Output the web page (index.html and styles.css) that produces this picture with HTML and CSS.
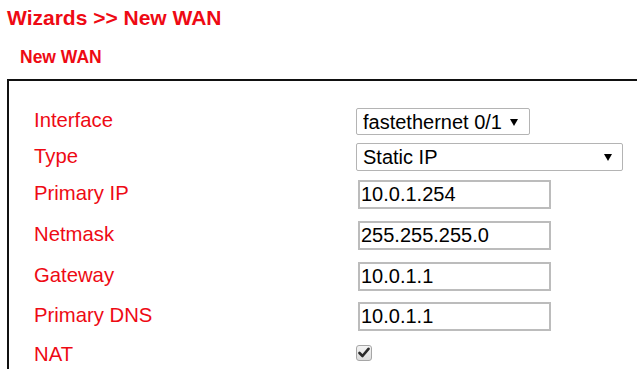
FILE: index.html
```html
<!DOCTYPE html>
<html>
<head>
<meta charset="utf-8">
<title>Wizards &gt;&gt; New WAN</title>
<link rel="stylesheet" href="styles.css">
</head>
<body>
<h1 class="title">Wizards &gt;&gt; New WAN</h1>
<h2 class="subtitle">New WAN</h2>
<div class="panel">
  <div class="row row-sel1">
    <label class="lbl">Interface</label>
    <div class="sel-wrap sel-short">
      <select class="sel"><option>fastethernet 0/1</option></select>
      <svg class="arrow" width="8" height="7" viewBox="0 0 8 7"><path d="M0 0H8L4 7Z" fill="#000"/></svg>
    </div>
  </div>
  <div class="row row-sel2">
    <label class="lbl">Type</label>
    <div class="sel-wrap sel-long">
      <select class="sel"><option>Static IP</option></select>
      <svg class="arrow" width="8" height="7" viewBox="0 0 8 7"><path d="M0 0H8L4 7Z" fill="#000"/></svg>
    </div>
  </div>
  <div class="row row-in">
    <label class="lbl">Primary IP</label>
    <input class="txt" type="text" value="10.0.1.254">
  </div>
  <div class="row row-in">
    <label class="lbl">Netmask</label>
    <input class="txt" type="text" value="255.255.255.0">
  </div>
  <div class="row row-in row-in-tight">
    <label class="lbl">Gateway</label>
    <input class="txt" type="text" value="10.0.1.1">
  </div>
  <div class="row row-in">
    <label class="lbl">Primary DNS</label>
    <input class="txt" type="text" value="10.0.1.1">
  </div>
  <div class="row row-chk">
    <label class="lbl">NAT</label>
    <span class="chk"><svg width="12" height="11" viewBox="0 0 12 11"><path d="M1.5 6 L4.5 9 L10.5 1.8" fill="none" stroke="#2a2a2a" stroke-width="2.6" stroke-linecap="round" stroke-linejoin="round"/></svg></span>
  </div>
</div>
</body>
</html>
```

FILE: styles.css
```css
html, body {
  margin: 0;
  padding: 0;
  background: #fff;
  overflow: hidden;
}
body {
  font-family: "Liberation Sans", Arial, sans-serif;
  color: #000;
  width: 637px;
  height: 370px;
}
.title {
  margin: 0;
  padding: 6px 0 0 7px;
  font-size: 21px;
  line-height: 23px;
  font-weight: bold;
  color: #ee0a14;
}
.subtitle {
  margin: 19px 0 0 0;
  padding-left: 20px;
  font-size: 17.5px;
  line-height: 19px;
  font-weight: bold;
  color: #ee0a14;
}
.panel {
  margin: 12px 0 0 7px;
  height: 290px;
  border-top: 2px solid #111;
  border-left: 2px solid #111;
  box-sizing: border-box;
  padding: 27px 0 0 25px;
  overflow: hidden;
}
.row {
  display: flex;
  align-items: center;
}
.row-sel1 { margin-bottom: 8px; }
.row-sel2 { margin-bottom: 9px; }
.row-in { margin-bottom: 12px; }
.row-in-tight { margin-bottom: 11px; }
.lbl {
  width: 322px;
  flex: none;
  font-size: 20.3px;
  line-height: 22px;
  color: #ee0a14;
  margin-bottom: 3px;
}
.sel-wrap {
  position: relative;
  flex: none;
}
.sel-short { width: 174px; height: 27px; }
.sel-long { width: 267px; height: 28px; }
.sel {
  appearance: none;
  -webkit-appearance: none;
  width: 100%;
  height: 100%;
  box-sizing: border-box;
  border: 1.5px solid #b4b4b4;
  border-radius: 2px;
  background: #fff;
  font-family: "Liberation Sans", Arial, sans-serif;
  font-size: 20px;
  color: #000;
  padding: 0 0 0 6px;
  margin: 0;
  display: block;
}
.arrow {
  position: absolute;
  top: 50%;
  margin-top: -3px;
  right: 12px;
  pointer-events: none;
}
.sel-long .arrow { right: 11px; }
.txt {
  flex: none;
  margin: 0 0 0 2px;
  width: 193px;
  height: 29px;
  box-sizing: border-box;
  border: 2px solid #bcbcbc;
  border-radius: 0;
  padding: 0 1px;
  font-family: "Liberation Sans", Arial, sans-serif;
  font-size: 20px;
  color: #000;
  background: #fff;
  outline: none;
}
.chk {
  flex: none;
  width: 16px;
  height: 16px;
  box-sizing: border-box;
  border: 1px solid #a6a6a6;
  border-radius: 3px;
  background: linear-gradient(#f4f4f4, #dcdcdc);
  display: flex;
  align-items: center;
  justify-content: center;
  margin-bottom: 6px;
}
.chk svg { display: block; }
```
